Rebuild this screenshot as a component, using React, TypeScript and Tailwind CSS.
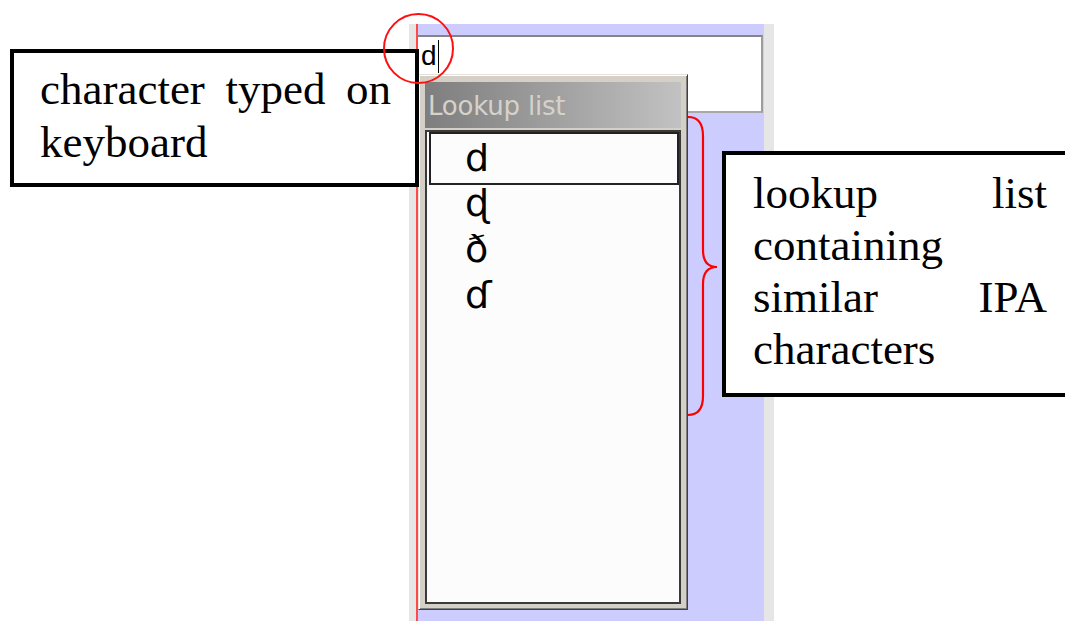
const serif = { fontFamily: '"Liberation Serif", "Times New Roman", serif' }

const suggestions = ['ɖ', 'ð', 'ɗ']

function LookupPopup() {
  return (
    <div className="absolute left-0 top-[50px] w-[270px] h-[536px] flex flex-col bg-[#d4d0c8] border border-[#e4e1da] border-r-[#404040] border-b-[#404040] shadow-[inset_1px_1px_0_#ffffff,inset_-1px_-1px_0_#808080] pt-[7px] pl-[6px] pr-[6px] pb-[5px]">
      {/* Title bar */}
      <div className="h-[46px] shrink-0 bg-gradient-to-r from-[#7e7e7e] to-[#c2c2c2] pl-[3px] pt-[1px] text-[26px] leading-[46px] text-[#d6d2ca] font-['DejaVu_Sans',sans-serif] tracking-[-0.2px]">
        Lookup list
      </div>

      {/* List */}
      <div className="mt-[2px] flex-1 bg-[#fcfcfc] border-2 border-[#3a3a3a] font-['DejaVu_Sans',sans-serif] text-[38px] text-black">
        <div className="ml-[2px] border-2 border-[#222] pl-[34px] pt-[6px] pb-[7px] leading-[36px]">d</div>
        {suggestions.map((c) => (
          <div key={c} className="h-[46px] pl-[38px] leading-[36px]">
            {c}
          </div>
        ))}
      </div>
    </div>
  )
}

export default function App() {
  return (
    <div className="relative w-[1065px] h-[621px] overflow-hidden bg-white">
      {/* Captured editor panel */}
      <div className="ml-[409px] pt-[24px] w-[365px] h-[621px]">
        <div className="h-full flex bg-[#e6e6e6] pl-[7px] pr-[10px]">
          <div className="relative flex-1 bg-[#ccccff] border-l-2 border-[#ff4a4a] pt-[11px]">
            <div className="h-[78px] mr-[1px] bg-white border-t-2 border-[#858585] border-r-2 border-r-[#9c9c9c] border-b-2 border-b-[#a8a8a8] flex items-start pl-[3px] pt-[3px]">
              <span className="text-[28px] leading-[32px] font-['Liberation_Sans',sans-serif] text-black">d</span>
              <span className="ml-[1px] w-[1px] h-[33px] bg-black" />
            </div>
            <LookupPopup />
          </div>
        </div>
      </div>

      {/* Callout: typed character */}
      <div className="absolute left-[10px] top-[49px] w-[409px] h-[138px] border-4 border-black bg-white pl-[26px] pr-[24px] pt-[10px]">
        <p style={serif} className="text-[45px] leading-[53px] text-justify text-black">
          character typed on keyboard
        </p>
      </div>

      {/* Red circle marking the typed character */}
      <div className="absolute left-[383px] top-[13px] w-[71px] h-[71px] rounded-full border-2 border-[#ff1010]" />

      {/* Brace */}
      <svg className="absolute left-[684px] top-[114px]" width="40" height="306" viewBox="684 114 40 306">
        <path
          d="M688 117 Q703 117 703 136 L703 250 Q703 267 717 267 Q703 267 703 284 L703 396 Q703 415 688 415"
          fill="none"
          stroke="#ff0000"
          strokeWidth="2.2"
        />
      </svg>

      {/* Callout: lookup list */}
      <div className="absolute left-[722px] top-[151px] w-[420px] h-[246px] border-4 border-black bg-white pl-[27px] pt-[12px]">
        <p style={serif} className="w-[294px] text-[45px] leading-[52px] text-justify text-black">
          lookup list containing similar IPA characters
        </p>
      </div>
    </div>
  )
}
